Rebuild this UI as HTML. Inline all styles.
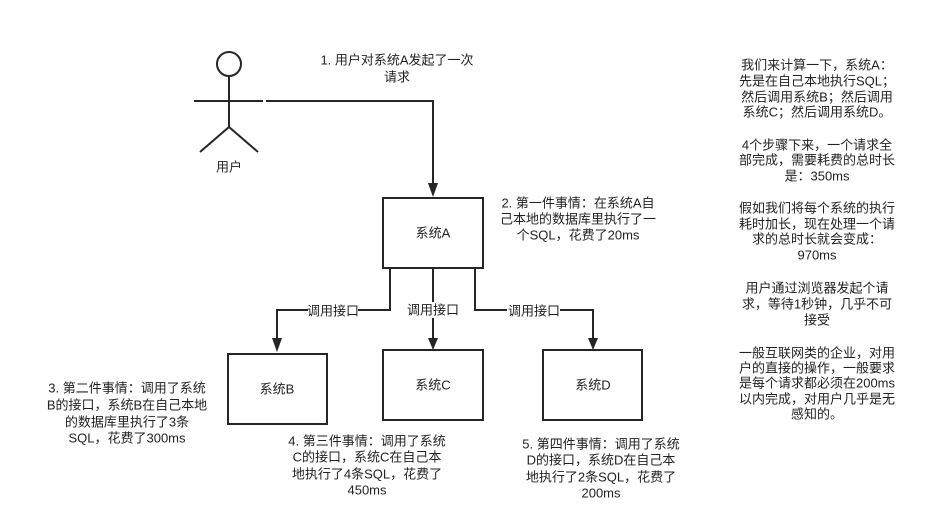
<!DOCTYPE html>
<html><head><meta charset="utf-8"><style>
html,body{margin:0;padding:0;background:#fff;width:930px;height:520px;overflow:hidden}
svg text{font-family:"Liberation Sans","Noto Sans CJK SC",sans-serif;font-size:13px;fill:#222;text-anchor:middle;dominant-baseline:central}
</style></head><body>
<svg width="930" height="520" viewBox="0 0 930 520" xmlns="http://www.w3.org/2000/svg">
<g stroke="#262626" stroke-width="2" fill="none">
<circle cx="229" cy="64" r="12"/>
<line x1="229" y1="76" x2="229" y2="127"/>
<line x1="194" y1="101" x2="263" y2="101"/>
<line x1="229" y1="127" x2="200" y2="152"/>
<line x1="229" y1="127" x2="258" y2="152"/>
<polyline points="266,101 433,101 433,186"/>
<rect x="383" y="198" width="100" height="70"/>
<polyline points="390,268 390,310 358,310"/>
<polyline points="308,310 277,310 277,340"/>
<line x1="433" y1="268" x2="433" y2="340"/>
<polyline points="475,268 475,310 507,310"/>
<polyline points="560,310 593,310 593,340"/>
<rect x="228" y="354" width="99" height="70"/>
<rect x="383" y="350" width="100" height="70"/>
<rect x="543" y="350" width="99" height="70"/>
</g>
<rect x="406" y="302" width="54" height="16" fill="#fff"/>
<g fill="#262626">
<polygon points="428,183 438,183 433,197"/>
<polygon points="272,338 282,338 277,352"/>
<polygon points="428,338 438,338 433,350"/>
<polygon points="588,338 598,338 593,350"/>
</g>
<text x="229" y="167">用户</text>
<text x="397" y="60">1. 用户对系统A发起了一次</text>
<text x="397" y="77">请求</text>
<text x="433" y="233">系统A</text>
<text x="578" y="203">2. 第一件事情：在系统A自</text>
<text x="578" y="219">己本地的数据库里执行了一</text>
<text x="578" y="235">个SQL，花费了20ms</text>
<text x="333" y="311">调用接口</text>
<text x="433" y="310">调用接口</text>
<text x="534" y="311">调用接口</text>
<text x="277" y="389">系统B</text>
<text x="433" y="385">系统C</text>
<text x="593" y="385">系统D</text>
<text x="127" y="388">3. 第二件事情：调用了系统</text>
<text x="127" y="405">B的接口，系统B在自己本地</text>
<text x="127" y="422">的数据库里执行了3条</text>
<text x="127" y="438">SQL，花费了300ms</text>
<text x="367" y="441">4. 第三件事情：调用了系统</text>
<text x="367" y="457">C的接口，系统C在自己本</text>
<text x="367" y="474">地执行了4条SQL，花费了</text>
<text x="367" y="490">450ms</text>
<text x="601" y="444">5. 第四件事情：调用了系统</text>
<text x="601" y="460">D的接口，系统D在自己本</text>
<text x="601" y="477">地执行了2条SQL，花费了</text>
<text x="601" y="493">200ms</text>
<g>
<text x="817" y="65">我们来计算一下，系统A：</text>
<text x="817" y="81">先是在自己本地执行SQL；</text>
<text x="817" y="97">然后调用系统B；然后调用</text>
<text x="817" y="112">系统C；然后调用系统D。</text>
<text x="817" y="145">4个步骤下来，一个请求全</text>
<text x="817" y="160">部完成，需要耗费的总时长</text>
<text x="817" y="176">是：350ms</text>
<text x="817" y="208">假如我们将每个系统的执行</text>
<text x="817" y="224">耗时加长，现在处理一个请</text>
<text x="817" y="239">求的总时长就会变成：</text>
<text x="817" y="255">970ms</text>
<text x="817" y="288">用户通过浏览器发起个请</text>
<text x="817" y="304">求，等待1秒钟，几乎不可</text>
<text x="817" y="320">接受</text>
<text x="817" y="353">一般互联网类的企业，对用</text>
<text x="817" y="368">户的直接的操作，一般要求</text>
<text x="817" y="383">是每个请求都必须在200ms</text>
<text x="817" y="399">以内完成，对用户几乎是无</text>
<text x="817" y="414">感知的。</text>
</g>
</svg>
</body></html>
